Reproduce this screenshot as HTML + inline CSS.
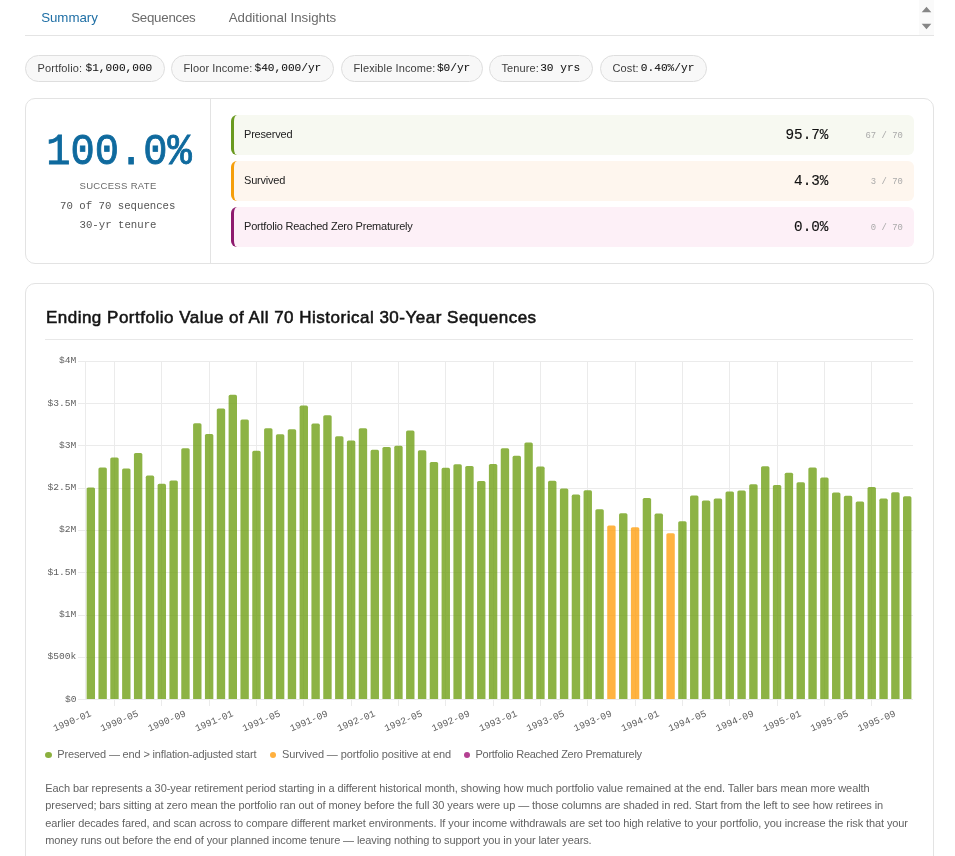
<!DOCTYPE html>
<html><head><meta charset="utf-8"><title>Summary</title>
<style>
html,body{margin:0;padding:0;background:#fff;}
body{width:955px;height:856px;overflow:hidden;position:relative;will-change:transform;font-family:"Liberation Sans", sans-serif;color:#222;}
.abs{position:absolute;white-space:nowrap;}
.mono{font-family:"Liberation Mono", monospace;}
.tab{position:absolute;top:9px;font-size:13.3px;line-height:18px;color:#6a6a6a;white-space:nowrap;}
.hline{position:absolute;left:25px;top:35px;width:909px;height:1px;background:#e4e4e4;}
.sb{position:absolute;left:919px;top:0;width:15px;height:35px;background:#fafafa;}
.chip{position:absolute;top:55px;height:27px;box-sizing:border-box;border:1px solid #dedede;border-radius:14px;background:#f8f8f8;font-size:11px;line-height:25px;padding-left:11.5px;white-space:nowrap;color:#3d3d3d;}
.cv{position:absolute;right:11.7px;top:0;font-family:"Liberation Mono", monospace;font-size:11.15px;color:#111;-webkit-text-stroke:0.06px #111;}
.card{position:absolute;left:25px;width:909px;box-sizing:border-box;border:1px solid #e3e3e3;border-radius:10px;background:#fff;}
.row{position:absolute;left:231px;width:683px;height:39.5px;box-sizing:border-box;border-left:3px solid;border-radius:6px;}
.rl{position:absolute;left:10px;top:0;line-height:39.5px;font-size:11px;letter-spacing:-0.2px;color:#222;white-space:nowrap;}
.rp{position:absolute;right:85.6px;top:1px;line-height:39.5px;font-family:"Liberation Mono", monospace;font-size:14.3px;color:#111;white-space:nowrap;-webkit-text-stroke:0.15px #111;}
.rc{position:absolute;right:11.2px;top:1px;line-height:40.5px;font-family:"Liberation Mono", monospace;font-size:8.9px;color:#aaa;white-space:nowrap;}
.chart{position:absolute;left:0;top:0;}
.ax{font-family:"Liberation Mono", monospace;font-size:9.6px;fill:#5e5e5e;}
.leg{position:absolute;top:747.4px;font-size:11px;line-height:14px;color:#666;white-space:nowrap;}
.dot{position:absolute;top:751.9px;width:6.2px;height:6.2px;border-radius:50%;}
.para{position:absolute;left:45.3px;font-size:11px;line-height:14px;color:#636363;white-space:nowrap;}
.cl{letter-spacing:0.12px;}
</style></head>
<body>
<div class="tab" style="left:41.2px;color:#1f6fa5;letter-spacing:-0.05px">Summary</div>
<div class="tab" style="left:131.2px;letter-spacing:-0.25px">Sequences</div>
<div class="tab" style="left:228.7px;letter-spacing:-0.02px">Additional Insights</div>
<div class="sb"><svg width="15" height="35" viewBox="0 0 15 35"><path d="M2.7 12.2 L7.5 6.7 L12.3 12.2Z M2.7 23.8 L7.5 29.3 L12.3 23.8Z" fill="#868686"/></svg></div>
<div class="hline"></div>
<div class="chip" style="left:25px;width:140px"><span class="cl">Portfolio:</span><span class="cv">$1,000,000</span></div>
<div class="chip" style="left:171px;width:163px"><span class="cl">Floor Income:</span><span class="cv">$40,000/yr</span></div>
<div class="chip" style="left:341px;width:142px"><span class="cl">Flexible Income:</span><span class="cv">$0/yr</span></div>
<div class="chip" style="left:489px;width:104px"><span class="cl">Tenure:</span><span class="cv">30 yrs</span></div>
<div class="chip" style="left:600px;width:107px"><span class="cl">Cost:</span><span class="cv">0.40%/yr</span></div>

<div class="card" style="top:98px;height:166px"></div>
<div class="abs" style="left:210px;top:99px;width:1px;height:164px;background:#e3e3e3"></div>
<div class="abs mono" style="left:46.3px;top:129.7px;font-weight:400;font-size:40.4px;line-height:46px;color:#0f6a9e;-webkit-text-stroke:0.8px #0f6a9e;transform-origin:0 36px;transform:scale(1,1.1);">100.0%</div>
<div class="abs" style="left:79.5px;top:179px;font-size:9.5px;line-height:13px;letter-spacing:0.32px;color:#6a6a6a;">SUCCESS RATE</div>
<div class="abs mono" style="left:60px;top:200px;font-size:10.7px;line-height:13px;color:#555;">70 of 70 sequences</div>
<div class="abs mono" style="left:79.5px;top:219px;font-size:10.7px;line-height:13px;color:#555;">30-yr tenure</div>
<div class="row" style="top:115px;background:#f7f9f1;border-left-color:#6a9a1f"><span class="rl">Preserved</span><span class="rp">95.7%</span><span class="rc">67 / 70</span></div>
<div class="row" style="top:161px;background:#fef6ee;border-left-color:#f59e0b"><span class="rl">Survived</span><span class="rp">4.3%</span><span class="rc">3 / 70</span></div>
<div class="row" style="top:207px;background:#fdf0f7;border-left-color:#8e1a6e"><span class="rl">Portfolio Reached Zero Prematurely</span><span class="rp">0.0%</span><span class="rc">0 / 70</span></div>

<div class="card" style="top:283px;height:620px"></div>
<div class="abs" style="left:45.9px;top:308.2px;font-size:17px;line-height:20px;font-weight:400;color:#141414;letter-spacing:0.5px;-webkit-text-stroke:0.55px #141414">Ending Portfolio Value of All 70 Historical 30-Year Sequences</div>
<div class="abs" style="left:45px;top:339px;width:868px;height:1px;background:#e8e8e8"></div>
<svg class="chart" width="955" height="856" viewBox="0 0 955 856">
<rect x="78" y="699" width="835" height="1" fill="#ebebeb"/>
<rect x="78" y="657" width="835" height="1" fill="#ebebeb"/>
<rect x="78" y="615" width="835" height="1" fill="#ebebeb"/>
<rect x="78" y="572" width="835" height="1" fill="#ebebeb"/>
<rect x="78" y="530" width="835" height="1" fill="#ebebeb"/>
<rect x="78" y="488" width="835" height="1" fill="#ebebeb"/>
<rect x="78" y="445" width="835" height="1" fill="#ebebeb"/>
<rect x="78" y="403" width="835" height="1" fill="#ebebeb"/>
<rect x="78" y="361" width="835" height="1" fill="#ebebeb"/>
<rect x="85" y="361" width="1" height="339" fill="#ebebeb"/>
<rect x="114" y="361" width="1" height="345" fill="#ebebeb"/>
<rect x="161" y="361" width="1" height="345" fill="#ebebeb"/>
<rect x="209" y="361" width="1" height="345" fill="#ebebeb"/>
<rect x="256" y="361" width="1" height="345" fill="#ebebeb"/>
<rect x="303" y="361" width="1" height="345" fill="#ebebeb"/>
<rect x="351" y="361" width="1" height="345" fill="#ebebeb"/>
<rect x="398" y="361" width="1" height="345" fill="#ebebeb"/>
<rect x="445" y="361" width="1" height="345" fill="#ebebeb"/>
<rect x="493" y="361" width="1" height="345" fill="#ebebeb"/>
<rect x="540" y="361" width="1" height="345" fill="#ebebeb"/>
<rect x="587" y="361" width="1" height="345" fill="#ebebeb"/>
<rect x="635" y="361" width="1" height="345" fill="#ebebeb"/>
<rect x="682" y="361" width="1" height="345" fill="#ebebeb"/>
<rect x="729" y="361" width="1" height="345" fill="#ebebeb"/>
<rect x="777" y="361" width="1" height="345" fill="#ebebeb"/>
<rect x="824" y="361" width="1" height="345" fill="#ebebeb"/>
<rect x="871" y="361" width="1" height="345" fill="#ebebeb"/>
<path d="M86.62 699.00V489.00Q86.62 487.40 88.22 487.40H93.42Q95.02 487.40 95.02 489.00V699.00Z" fill="rgba(112,160,22,0.8)"/>
<path d="M98.45 699.00V469.00Q98.45 467.40 100.05 467.40H105.25Q106.85 467.40 106.85 469.00V699.00Z" fill="rgba(112,160,22,0.8)"/>
<path d="M110.28 699.00V459.00Q110.28 457.40 111.88 457.40H117.08Q118.68 457.40 118.68 459.00V699.00Z" fill="rgba(112,160,22,0.8)"/>
<path d="M122.11 699.00V470.00Q122.11 468.40 123.71 468.40H128.91Q130.51 468.40 130.51 470.00V699.00Z" fill="rgba(112,160,22,0.8)"/>
<path d="M133.94 699.00V454.60Q133.94 453.00 135.54 453.00H140.74Q142.34 453.00 142.34 454.60V699.00Z" fill="rgba(112,160,22,0.8)"/>
<path d="M145.78 699.00V477.20Q145.78 475.60 147.38 475.60H152.58Q154.18 475.60 154.18 477.20V699.00Z" fill="rgba(112,160,22,0.8)"/>
<path d="M157.61 699.00V485.40Q157.61 483.80 159.21 483.80H164.41Q166.01 483.80 166.01 485.40V699.00Z" fill="rgba(112,160,22,0.8)"/>
<path d="M169.44 699.00V482.00Q169.44 480.40 171.04 480.40H176.24Q177.84 480.40 177.84 482.00V699.00Z" fill="rgba(112,160,22,0.8)"/>
<path d="M181.27 699.00V449.80Q181.27 448.20 182.87 448.20H188.07Q189.67 448.20 189.67 449.80V699.00Z" fill="rgba(112,160,22,0.8)"/>
<path d="M193.10 699.00V424.80Q193.10 423.20 194.70 423.20H199.90Q201.50 423.20 201.50 424.80V699.00Z" fill="rgba(112,160,22,0.8)"/>
<path d="M204.94 699.00V435.60Q204.94 434.00 206.54 434.00H211.74Q213.34 434.00 213.34 435.60V699.00Z" fill="rgba(112,160,22,0.8)"/>
<path d="M216.77 699.00V410.00Q216.77 408.40 218.37 408.40H223.57Q225.17 408.40 225.17 410.00V699.00Z" fill="rgba(112,160,22,0.8)"/>
<path d="M228.60 699.00V396.40Q228.60 394.80 230.20 394.80H235.40Q237.00 394.80 237.00 396.40V699.00Z" fill="rgba(112,160,22,0.8)"/>
<path d="M240.43 699.00V421.00Q240.43 419.40 242.03 419.40H247.23Q248.83 419.40 248.83 421.00V699.00Z" fill="rgba(112,160,22,0.8)"/>
<path d="M252.26 699.00V452.40Q252.26 450.80 253.86 450.80H259.06Q260.66 450.80 260.66 452.40V699.00Z" fill="rgba(112,160,22,0.8)"/>
<path d="M264.10 699.00V429.80Q264.10 428.20 265.70 428.20H270.90Q272.50 428.20 272.50 429.80V699.00Z" fill="rgba(112,160,22,0.8)"/>
<path d="M275.93 699.00V435.80Q275.93 434.20 277.53 434.20H282.73Q284.33 434.20 284.33 435.80V699.00Z" fill="rgba(112,160,22,0.8)"/>
<path d="M287.76 699.00V430.80Q287.76 429.20 289.36 429.20H294.56Q296.16 429.20 296.16 430.80V699.00Z" fill="rgba(112,160,22,0.8)"/>
<path d="M299.59 699.00V407.20Q299.59 405.60 301.19 405.60H306.39Q307.99 405.60 307.99 407.20V699.00Z" fill="rgba(112,160,22,0.8)"/>
<path d="M311.42 699.00V425.20Q311.42 423.60 313.02 423.60H318.22Q319.82 423.60 319.82 425.20V699.00Z" fill="rgba(112,160,22,0.8)"/>
<path d="M323.26 699.00V416.80Q323.26 415.20 324.86 415.20H330.06Q331.66 415.20 331.66 416.80V699.00Z" fill="rgba(112,160,22,0.8)"/>
<path d="M335.09 699.00V437.80Q335.09 436.20 336.69 436.20H341.89Q343.49 436.20 343.49 437.80V699.00Z" fill="rgba(112,160,22,0.8)"/>
<path d="M346.92 699.00V442.00Q346.92 440.40 348.52 440.40H353.72Q355.32 440.40 355.32 442.00V699.00Z" fill="rgba(112,160,22,0.8)"/>
<path d="M358.75 699.00V429.80Q358.75 428.20 360.35 428.20H365.55Q367.15 428.20 367.15 429.80V699.00Z" fill="rgba(112,160,22,0.8)"/>
<path d="M370.58 699.00V451.40Q370.58 449.80 372.18 449.80H377.38Q378.98 449.80 378.98 451.40V699.00Z" fill="rgba(112,160,22,0.8)"/>
<path d="M382.42 699.00V448.60Q382.42 447.00 384.02 447.00H389.22Q390.82 447.00 390.82 448.60V699.00Z" fill="rgba(112,160,22,0.8)"/>
<path d="M394.25 699.00V447.40Q394.25 445.80 395.85 445.80H401.05Q402.65 445.80 402.65 447.40V699.00Z" fill="rgba(112,160,22,0.8)"/>
<path d="M406.08 699.00V432.00Q406.08 430.40 407.68 430.40H412.88Q414.48 430.40 414.48 432.00V699.00Z" fill="rgba(112,160,22,0.8)"/>
<path d="M417.91 699.00V451.80Q417.91 450.20 419.51 450.20H424.71Q426.31 450.20 426.31 451.80V699.00Z" fill="rgba(112,160,22,0.8)"/>
<path d="M429.74 699.00V463.60Q429.74 462.00 431.34 462.00H436.54Q438.14 462.00 438.14 463.60V699.00Z" fill="rgba(112,160,22,0.8)"/>
<path d="M441.58 699.00V469.40Q441.58 467.80 443.18 467.80H448.38Q449.98 467.80 449.98 469.40V699.00Z" fill="rgba(112,160,22,0.8)"/>
<path d="M453.41 699.00V465.80Q453.41 464.20 455.01 464.20H460.21Q461.81 464.20 461.81 465.80V699.00Z" fill="rgba(112,160,22,0.8)"/>
<path d="M465.24 699.00V467.60Q465.24 466.00 466.84 466.00H472.04Q473.64 466.00 473.64 467.60V699.00Z" fill="rgba(112,160,22,0.8)"/>
<path d="M477.07 699.00V482.60Q477.07 481.00 478.67 481.00H483.87Q485.47 481.00 485.47 482.60V699.00Z" fill="rgba(112,160,22,0.8)"/>
<path d="M488.90 699.00V465.60Q488.90 464.00 490.50 464.00H495.70Q497.30 464.00 497.30 465.60V699.00Z" fill="rgba(112,160,22,0.8)"/>
<path d="M500.74 699.00V449.80Q500.74 448.20 502.34 448.20H507.54Q509.14 448.20 509.14 449.80V699.00Z" fill="rgba(112,160,22,0.8)"/>
<path d="M512.57 699.00V457.40Q512.57 455.80 514.17 455.80H519.37Q520.97 455.80 520.97 457.40V699.00Z" fill="rgba(112,160,22,0.8)"/>
<path d="M524.40 699.00V444.00Q524.40 442.40 526.00 442.40H531.20Q532.80 442.40 532.80 444.00V699.00Z" fill="rgba(112,160,22,0.8)"/>
<path d="M536.23 699.00V468.20Q536.23 466.60 537.83 466.60H543.03Q544.63 466.60 544.63 468.20V699.00Z" fill="rgba(112,160,22,0.8)"/>
<path d="M548.06 699.00V482.40Q548.06 480.80 549.66 480.80H554.86Q556.46 480.80 556.46 482.40V699.00Z" fill="rgba(112,160,22,0.8)"/>
<path d="M559.90 699.00V490.00Q559.90 488.40 561.50 488.40H566.70Q568.30 488.40 568.30 490.00V699.00Z" fill="rgba(112,160,22,0.8)"/>
<path d="M571.73 699.00V496.20Q571.73 494.60 573.33 494.60H578.53Q580.13 494.60 580.13 496.20V699.00Z" fill="rgba(112,160,22,0.8)"/>
<path d="M583.56 699.00V491.80Q583.56 490.20 585.16 490.20H590.36Q591.96 490.20 591.96 491.80V699.00Z" fill="rgba(112,160,22,0.8)"/>
<path d="M595.39 699.00V510.80Q595.39 509.20 596.99 509.20H602.19Q603.79 509.20 603.79 510.80V699.00Z" fill="rgba(112,160,22,0.8)"/>
<path d="M607.22 699.00V527.00Q607.22 525.40 608.82 525.40H614.02Q615.62 525.40 615.62 527.00V699.00Z" fill="rgba(255,160,18,0.8)"/>
<path d="M619.06 699.00V514.80Q619.06 513.20 620.66 513.20H625.86Q627.46 513.20 627.46 514.80V699.00Z" fill="rgba(112,160,22,0.8)"/>
<path d="M630.89 699.00V528.80Q630.89 527.20 632.49 527.20H637.69Q639.29 527.20 639.29 528.80V699.00Z" fill="rgba(255,160,18,0.8)"/>
<path d="M642.72 699.00V499.60Q642.72 498.00 644.32 498.00H649.52Q651.12 498.00 651.12 499.60V699.00Z" fill="rgba(112,160,22,0.8)"/>
<path d="M654.55 699.00V515.20Q654.55 513.60 656.15 513.60H661.35Q662.95 513.60 662.95 515.20V699.00Z" fill="rgba(112,160,22,0.8)"/>
<path d="M666.38 699.00V534.80Q666.38 533.20 667.98 533.20H673.18Q674.78 533.20 674.78 534.80V699.00Z" fill="rgba(255,160,18,0.8)"/>
<path d="M678.22 699.00V522.80Q678.22 521.20 679.82 521.20H685.02Q686.62 521.20 686.62 522.80V699.00Z" fill="rgba(112,160,22,0.8)"/>
<path d="M690.05 699.00V497.00Q690.05 495.40 691.65 495.40H696.85Q698.45 495.40 698.45 497.00V699.00Z" fill="rgba(112,160,22,0.8)"/>
<path d="M701.88 699.00V502.00Q701.88 500.40 703.48 500.40H708.68Q710.28 500.40 710.28 502.00V699.00Z" fill="rgba(112,160,22,0.8)"/>
<path d="M713.71 699.00V500.00Q713.71 498.40 715.31 498.40H720.51Q722.11 498.40 722.11 500.00V699.00Z" fill="rgba(112,160,22,0.8)"/>
<path d="M725.54 699.00V493.00Q725.54 491.40 727.14 491.40H732.34Q733.94 491.40 733.94 493.00V699.00Z" fill="rgba(112,160,22,0.8)"/>
<path d="M737.38 699.00V492.00Q737.38 490.40 738.98 490.40H744.18Q745.78 490.40 745.78 492.00V699.00Z" fill="rgba(112,160,22,0.8)"/>
<path d="M749.21 699.00V485.80Q749.21 484.20 750.81 484.20H756.01Q757.61 484.20 757.61 485.80V699.00Z" fill="rgba(112,160,22,0.8)"/>
<path d="M761.04 699.00V467.80Q761.04 466.20 762.64 466.20H767.84Q769.44 466.20 769.44 467.80V699.00Z" fill="rgba(112,160,22,0.8)"/>
<path d="M772.87 699.00V486.60Q772.87 485.00 774.47 485.00H779.67Q781.27 485.00 781.27 486.60V699.00Z" fill="rgba(112,160,22,0.8)"/>
<path d="M784.70 699.00V474.30Q784.70 472.70 786.30 472.70H791.50Q793.10 472.70 793.10 474.30V699.00Z" fill="rgba(112,160,22,0.8)"/>
<path d="M796.54 699.00V483.80Q796.54 482.20 798.14 482.20H803.34Q804.94 482.20 804.94 483.80V699.00Z" fill="rgba(112,160,22,0.8)"/>
<path d="M808.37 699.00V469.00Q808.37 467.40 809.97 467.40H815.17Q816.77 467.40 816.77 469.00V699.00Z" fill="rgba(112,160,22,0.8)"/>
<path d="M820.20 699.00V479.00Q820.20 477.40 821.80 477.40H827.00Q828.60 477.40 828.60 479.00V699.00Z" fill="rgba(112,160,22,0.8)"/>
<path d="M832.03 699.00V494.00Q832.03 492.40 833.63 492.40H838.83Q840.43 492.40 840.43 494.00V699.00Z" fill="rgba(112,160,22,0.8)"/>
<path d="M843.86 699.00V497.40Q843.86 495.80 845.46 495.80H850.66Q852.26 495.80 852.26 497.40V699.00Z" fill="rgba(112,160,22,0.8)"/>
<path d="M855.70 699.00V503.00Q855.70 501.40 857.30 501.40H862.50Q864.10 501.40 864.10 503.00V699.00Z" fill="rgba(112,160,22,0.8)"/>
<path d="M867.53 699.00V488.60Q867.53 487.00 869.13 487.00H874.33Q875.93 487.00 875.93 488.60V699.00Z" fill="rgba(112,160,22,0.8)"/>
<path d="M879.36 699.00V500.20Q879.36 498.60 880.96 498.60H886.16Q887.76 498.60 887.76 500.20V699.00Z" fill="rgba(112,160,22,0.8)"/>
<path d="M891.19 699.00V493.80Q891.19 492.20 892.79 492.20H897.99Q899.59 492.20 899.59 493.80V699.00Z" fill="rgba(112,160,22,0.8)"/>
<path d="M903.02 699.00V497.80Q903.02 496.20 904.62 496.20H909.82Q911.42 496.20 911.42 497.80V699.00Z" fill="rgba(112,160,22,0.8)"/>
<text x="76.4" y="701.50" text-anchor="end" class="ax">$0</text>
<text x="76.4" y="659.23" text-anchor="end" class="ax">$500k</text>
<text x="76.4" y="616.95" text-anchor="end" class="ax">$1M</text>
<text x="76.4" y="574.67" text-anchor="end" class="ax">$1.5M</text>
<text x="76.4" y="532.40" text-anchor="end" class="ax">$2M</text>
<text x="76.4" y="490.13" text-anchor="end" class="ax">$2.5M</text>
<text x="76.4" y="447.85" text-anchor="end" class="ax">$3M</text>
<text x="76.4" y="405.57" text-anchor="end" class="ax">$3.5M</text>
<text x="76.4" y="363.30" text-anchor="end" class="ax">$4M</text>
<text transform="translate(88.57 708.1) rotate(-23)" x="0" y="8.4" text-anchor="end" class="ax">1990-01</text>
<text transform="translate(135.89 708.1) rotate(-23)" x="0" y="8.4" text-anchor="end" class="ax">1990-05</text>
<text transform="translate(183.22 708.1) rotate(-23)" x="0" y="8.4" text-anchor="end" class="ax">1990-09</text>
<text transform="translate(230.55 708.1) rotate(-23)" x="0" y="8.4" text-anchor="end" class="ax">1991-01</text>
<text transform="translate(277.88 708.1) rotate(-23)" x="0" y="8.4" text-anchor="end" class="ax">1991-05</text>
<text transform="translate(325.21 708.1) rotate(-23)" x="0" y="8.4" text-anchor="end" class="ax">1991-09</text>
<text transform="translate(372.53 708.1) rotate(-23)" x="0" y="8.4" text-anchor="end" class="ax">1992-01</text>
<text transform="translate(419.86 708.1) rotate(-23)" x="0" y="8.4" text-anchor="end" class="ax">1992-05</text>
<text transform="translate(467.19 708.1) rotate(-23)" x="0" y="8.4" text-anchor="end" class="ax">1992-09</text>
<text transform="translate(514.52 708.1) rotate(-23)" x="0" y="8.4" text-anchor="end" class="ax">1993-01</text>
<text transform="translate(561.85 708.1) rotate(-23)" x="0" y="8.4" text-anchor="end" class="ax">1993-05</text>
<text transform="translate(609.17 708.1) rotate(-23)" x="0" y="8.4" text-anchor="end" class="ax">1993-09</text>
<text transform="translate(656.50 708.1) rotate(-23)" x="0" y="8.4" text-anchor="end" class="ax">1994-01</text>
<text transform="translate(703.83 708.1) rotate(-23)" x="0" y="8.4" text-anchor="end" class="ax">1994-05</text>
<text transform="translate(751.16 708.1) rotate(-23)" x="0" y="8.4" text-anchor="end" class="ax">1994-09</text>
<text transform="translate(798.49 708.1) rotate(-23)" x="0" y="8.4" text-anchor="end" class="ax">1995-01</text>
<text transform="translate(845.81 708.1) rotate(-23)" x="0" y="8.4" text-anchor="end" class="ax">1995-05</text>
<text transform="translate(893.14 708.1) rotate(-23)" x="0" y="8.4" text-anchor="end" class="ax">1995-09</text>
</svg>
<div class="dot" style="left:45.2px;width:6.9px;background:#8bb03e"></div>
<div class="leg" style="left:57.3px;letter-spacing:-0.16px">Preserved — end &gt; inflation-adjusted start</div>
<div class="dot" style="left:270px;background:#ffb03e"></div>
<div class="leg" style="left:282px;letter-spacing:-0.11px">Survived — portfolio positive at end</div>
<div class="dot" style="left:464px;background:#b44092"></div>
<div class="leg" style="left:475.5px;letter-spacing:-0.27px">Portfolio Reached Zero Prematurely</div>
<div class="para" style="top:780.5px;letter-spacing:-0.09px">Each bar represents a 30-year retirement period starting in a different historical month, showing how much portfolio value remained at the end. Taller bars mean more wealth</div>
<div class="para" style="top:798px;letter-spacing:-0.089px">preserved; bars sitting at zero mean the portfolio ran out of money before the full 30 years were up — those columns are shaded in red. Start from the left to see how retirees in</div>
<div class="para" style="top:815.6px;letter-spacing:-0.099px">earlier decades fared, and scan across to compare different market environments. If your income withdrawals are set too high relative to your portfolio, you increase the risk that your</div>
<div class="para" style="top:833.1px;letter-spacing:-0.112px">money runs out before the end of your planned income tenure — leaving nothing to support you in your later years.</div>
</body></html>
